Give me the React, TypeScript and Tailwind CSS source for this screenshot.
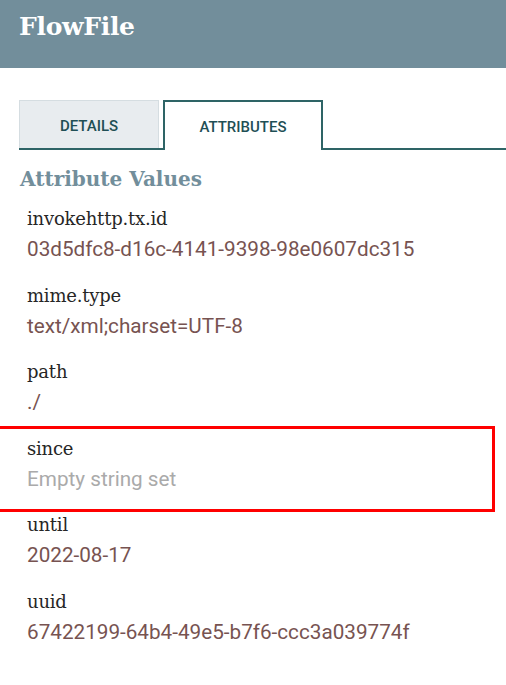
import React from "react";

type Attr = {
  name: string;
  value: string;
  empty?: boolean;
  flagged?: boolean;
};

const attributes: Attr[] = [
  { name: "invokehttp.tx.id", value: "03d5dfc8-d16c-4141-9398-98e0607dc315" },
  { name: "mime.type", value: "text/xml;charset=UTF-8" },
  { name: "path", value: "./" },
  { name: "since", value: "Empty string set", empty: true, flagged: true },
  { name: "until", value: "2022-08-17" },
  { name: "uuid", value: "67422199-64b4-49e5-b7f6-ccc3a039774f" },
];

const slab = "font-['DejaVu_Serif',serif]";
const sans = "font-['Roboto','Liberation_Sans',sans-serif]";

function AttributeRow({ attr }: { attr: Attr }) {
  return (
    <div className="relative pl-[27px] pb-[16.5px]">
      {/* rahmen um den markierten eintrag */}
      {attr.flagged ? (
        <div className="absolute left-[-6px] right-[11px] top-[-8px] bottom-[-2px] border-[3px] border-[#ff0000] pointer-events-none" />
      ) : null}
      <div
        className={`${slab} text-[18px] tracking-[-0.2px] leading-[30px] text-[#262626]`}
      >
        {attr.name}
      </div>
      <div
        className={`${sans} text-[20.7px] leading-[30px] ${
          attr.empty ? "text-[#aaaaaa]" : "text-[#775351]"
        }`}
      >
        {attr.value}
      </div>
    </div>
  );
}

export default function App() {
  return (
    <div className="w-[506px] h-[685px] bg-white overflow-hidden">
      <div className="h-[68px] bg-[#728e9b] pl-[19px] pt-[11px]">
        <h1
          className={`${slab} font-bold text-[25px] tracking-[-0.3px] leading-[32px] text-white`}
        >
          FlowFile
        </h1>
      </div>

      <div className="mt-[32px] ml-[19px] flex items-end gap-[4px] border-b-2 border-[#2e6466] h-[50px]">
        <div
          className={`${sans} w-[140px] h-[48px] pt-[4px] flex items-center justify-center bg-[#e8ecef] border border-b-0 border-[#d5dde1] text-[15px] font-medium text-[#1f4f55]`}
        >
          DETAILS
        </div>
        <div
          className={`${sans} w-[160px] h-[50px] -mb-[2px] pt-[2px] flex items-center justify-center bg-white border-2 border-b-0 border-[#2e6466] text-[15px] font-medium text-[#1f4f55]`}
        >
          ATTRIBUTES
        </div>
      </div>

      <div className="pt-[16px]">
        <h2
          className={`${slab} font-bold text-[20px] leading-[26px] text-[#728e9b] pl-[20px] mb-[12px]`}
        >
          Attribute Values
        </h2>
        {attributes.map((a) => (
          <AttributeRow key={a.name} attr={a} />
        ))}
      </div>
    </div>
  );
}
